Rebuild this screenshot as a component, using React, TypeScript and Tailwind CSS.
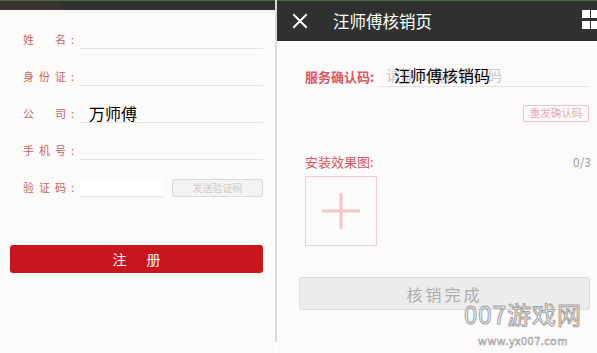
import React from "react";

const font = { fontFamily: '"Noto Sans CJK SC", "Noto Sans", sans-serif' };

function Label({ chars }: { chars: string[] }) {
  return (
    <div className="flex items-center w-[80px] pl-[23px] text-[11px] text-[#cc6464]">
      <div className="flex justify-between w-[43px]">
        {chars.map((c, i) => (
          <span key={i}>{c}</span>
        ))}
      </div>
      <span className="ml-[5px]">:</span>
    </div>
  );
}

function Row({ chars, children, short }: { chars: string[]; children?: React.ReactNode; short?: boolean }) {
  return (
    <div className="flex items-center h-[37px]">
      <Label chars={chars} />
      {short ? (
        children
      ) : (
        <div className="flex-1 mr-[12px] h-[18px] border-b border-[#e7e3e2] flex items-center">{children}</div>
      )}
    </div>
  );
}

export default function App() {
  return (
    <div className="w-[597px] h-[353px] flex overflow-hidden bg-white" style={font}>
      {/* Left panel */}
      <div className="w-[275px] h-full flex flex-col bg-[#fdfbf9]">
        <div className="h-[10px] flex border-t border-[#4d6a3a]">
          <div className="w-[60px] bg-[#3a3430]" />
          <div className="flex-1 bg-[#2f3231]" />
        </div>
        <div className="pt-[11px] flex flex-col">
          <Row chars={["姓", "名"]} />
          <Row chars={["身", "份", "证"]} />
          <Row chars={["公", "司"]}>
            <span className="pl-[9px] text-[16px] leading-none text-black">万师傅</span>
          </Row>
          <Row chars={["手", "机", "号"]} />
          <Row chars={["验", "证", "码"]} short>
            <div className="w-[83px] h-[18px] border-b border-[#e7e3e2] bg-white" />
            <div className="ml-[9px] w-[91px] h-[18px] border border-[#dcd9d8] bg-[#f5f3f2] rounded-[2px] flex items-center justify-center text-[10px] text-[#cfcccc]">
              发送验证码
            </div>
          </Row>
        </div>
        <div className="mt-[39px] ml-[10px] w-[253px] h-[28px] bg-[#c8161f] rounded-[3px] flex items-center justify-center gap-[20px] text-white text-[14px]">
          <span>注</span>
          <span>册</span>
        </div>
      </div>

      {/* Divider */}
      <div className="w-[2px] h-full flex flex-col">
        <div className="h-[342px] bg-[#dcdada]" />
        <div className="flex-1 bg-white" />
      </div>

      {/* Right panel */}
      <div className="flex-1 h-full flex flex-col bg-[#fcfafb] relative">
        <div className="h-[41px] bg-[#2f3131] flex items-center relative border-t border-[#4d6a3a]">
          <svg className="ml-[15px]" width="16" height="16" viewBox="0 0 16 16">
            <path d="M2 2 L14 14 M14 2 L2 14" stroke="#fff" strokeWidth="2" strokeLinecap="square" />
          </svg>
          <span className="ml-[25px] text-white text-[16.5px] leading-none">汪师傅核销页</span>
          <div className="absolute left-[305px] top-[9px] grid grid-cols-2 gap-[3px]">
            <div className="w-[8px] h-[8px] bg-white" />
            <div className="w-[8px] h-[8px] bg-white" />
            <div className="w-[8px] h-[8px] bg-white" />
            <div className="w-[8px] h-[8px] bg-white" />
          </div>
        </div>

        <div className="pt-[24px] flex flex-col">
          <div className="flex items-center">
            <span className="pl-[28px] w-[101px] text-[13px] font-bold text-[#dc5561] leading-none">服务确认码:</span>
            <div className="relative w-[211px] h-[22px] border-b border-[#e6e2e3] flex items-center">
              <span className="pl-[8px] text-[14.5px] text-[#c9c6c7] leading-none">请输入服务确认码</span>
              <span className="absolute left-[16px] top-[2px] text-[16px] leading-none text-black bg-transparent">汪师傅核销码</span>
            </div>
          </div>
          <div className="flex justify-end mt-[18px] mr-[8px]">
            <div className="w-[66px] h-[17px] border border-[#f1c4c7] rounded-[2px] flex items-center justify-center text-[10.5px] text-[#ecaab0] leading-none">
              重发确认码
            </div>
          </div>
          <div className="flex items-center justify-between mt-[33px] pl-[28px] pr-[6px]">
            <span className="text-[13px] text-[#dc5561] leading-none">安装效果图:</span>
            <span className="text-[12px] text-[#9d9a9b] leading-none">0/3</span>
          </div>
          <div className="mt-[8px] ml-[28px] w-[72px] h-[70px] border border-[#f0cfd0] flex items-center justify-center">
            <svg width="38" height="36" viewBox="0 0 38 36">
              <path d="M0 18 H38 M19 0 V36" stroke="#f3c6c8" strokeWidth="3" />
            </svg>
          </div>
          <div className="mt-[31px] ml-[22px] w-[291px] h-[33px] bg-[#ececec] border border-[#dcdcdc] rounded-[2px] flex items-center justify-center text-[16px] text-[#aeaeae] tracking-[3px] leading-none">
            核销完成
          </div>
        </div>

        <div className="absolute left-[187px] top-[302px] flex flex-col items-center">
          <span className="text-[24px] leading-none text-white [-webkit-text-stroke:1px_#a0a0a0] tracking-[1px]">007游戏网</span>
          <span className="mt-[9px] text-[11px] leading-none text-white [-webkit-text-stroke:0.6px_#a0a0a0] tracking-[0.5px]">www.yx007.com</span>
        </div>
      </div>
    </div>
  );
}
